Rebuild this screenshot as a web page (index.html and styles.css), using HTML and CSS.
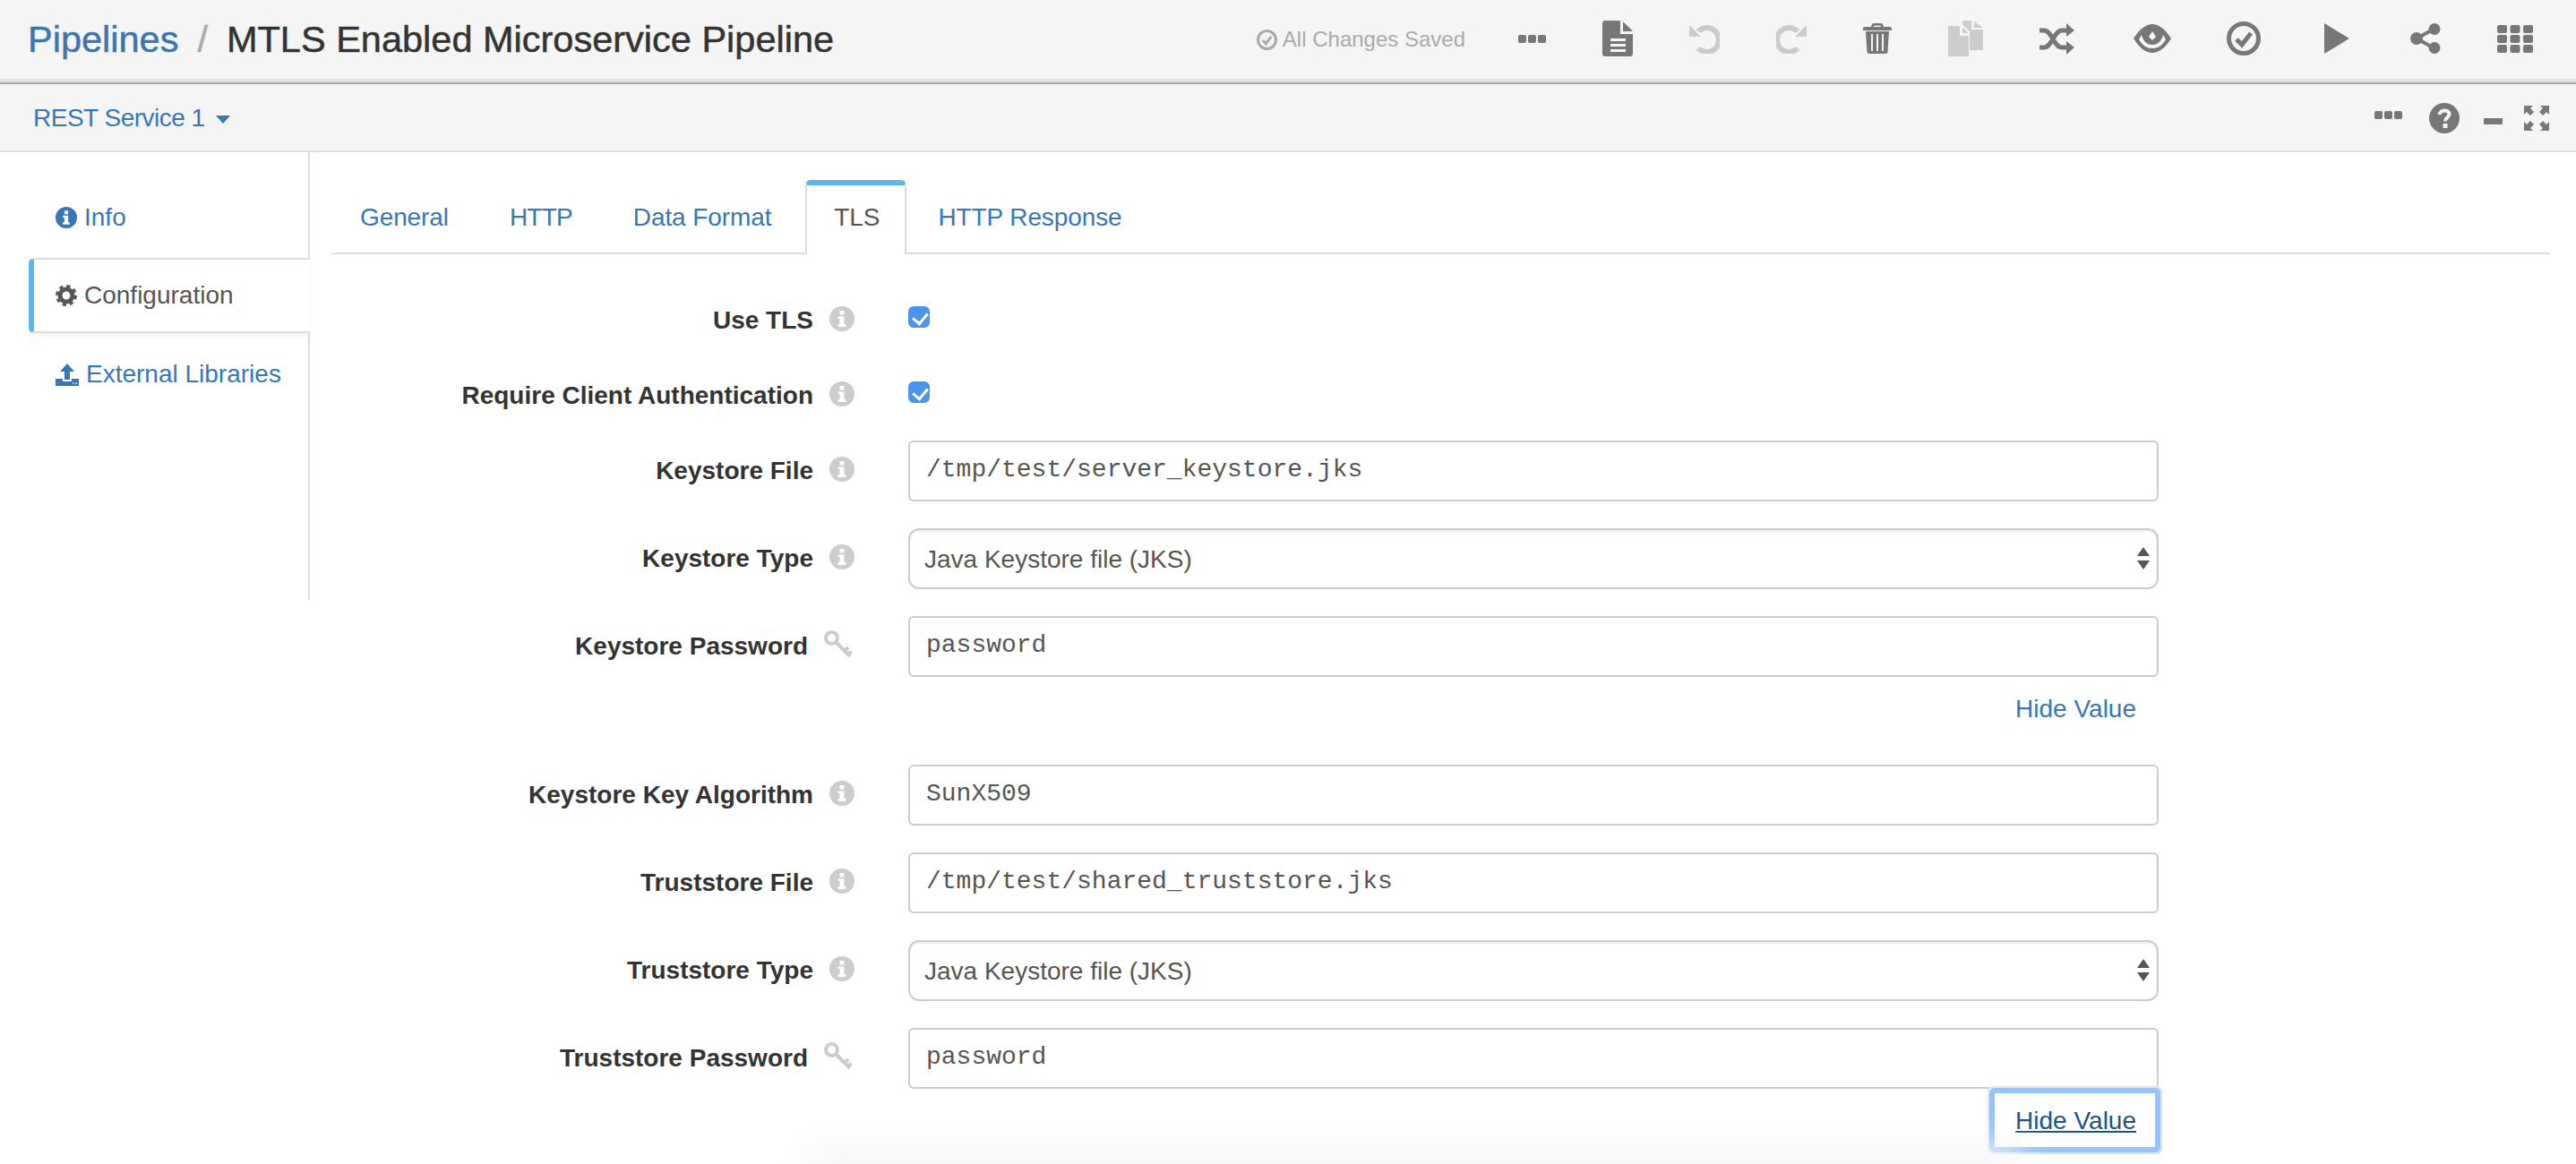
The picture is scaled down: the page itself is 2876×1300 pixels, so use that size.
FILE: index.html
```html
<!DOCTYPE html>
<html lang="en">
<head>
    <meta charset="UTF-8">
    <title>MTLS Enabled Microservice Pipeline</title>
    <link rel="stylesheet" href="styles.css">
</head>
<body>
    <svg class="sprite" xmlns="http://www.w3.org/2000/svg">
        <symbol id="i-dots" viewBox="0 0 31 9"><rect width="9" height="9" rx="2"/><rect x="11" width="9" height="9" rx="2"/><rect x="22" width="9" height="9" rx="2"/></symbol>
        <symbol id="i-doc" viewBox="0 0 34 40"><path fill-rule="evenodd" d="M3 0H20V15H34V37a3 3 0 0 1-3 3H3a3 3 0 0 1-3-3V3a3 3 0 0 1 3-3ZM9 20V23H26V20ZM9 26V29H26V26ZM9 32V35H26V32Z"/><path d="M23 1L34 12H23Z"/></symbol>
        <symbol id="i-undo" viewBox="0 0 34 34"><path d="M10 9A13.5 13.5 0 1 1 10 28" fill="none" stroke="currentColor" stroke-width="6"/><path d="M0 2V15H13Z"/></symbol>
        <symbol id="i-redo" viewBox="0 0 34 34"><path d="M24 9A13.5 13.5 0 1 0 24 28" fill="none" stroke="currentColor" stroke-width="6"/><path d="M34 2V15H21Z"/></symbol>
        <symbol id="i-trash" viewBox="0 0 32 34"><path fill-rule="evenodd" d="M9 4L10 1Q10.500 0 12 0H20Q21.500 0 22 1L23 4H30Q32 4 32 6V8H0V6Q0 4 2 4ZM12 4H20L19.500 2.500H12.500Z"/><path fill-rule="evenodd" d="M3 9H29L27.500 32Q27.400 34 25 34H7Q4.600 34 4.500 32ZM9 12V31H11V12ZM15 12V31H17V12ZM21 12V31H23V12Z"/></symbol>
        <symbol id="i-copy" viewBox="0 0 39 40"><path d="M16 0H26V10H39V33H24V12L16 4Z"/><path d="M29 1L39 8H29Z"/><path d="M0 6H13V17H23V40H0Z"/><path d="M16 8L23 14H16Z"/></symbol>
        <symbol id="i-shuffle" viewBox="0 0 39 35"><path d="M0 8H5C14 8 16 27 25 27H31M0 27H5C14 27 16 8 25 8H31" fill="none" stroke="currentColor" stroke-width="5"/><path d="M30 0L39 8L30 15ZM30 20L39 27L30 35Z"/></symbol>
        <symbol id="i-eye" viewBox="0 0 42 32"><path fill-rule="evenodd" d="M0 16C7 5 14 0 21 0S35 5 42 16C35 27 28 32 21 32S7 27 0 16ZM6 17C10 24 15 27 21 27S32 24 36 17C35 15 34 14 33 12C31 20 26 23 21 23S11 20 9 12C8 14 7 15 6 17Z"/><path fill="#f5f5f5" d="M21 8L25 14L21 18L17 14Z"/></symbol>
        <symbol id="i-check" viewBox="0 0 38 38"><circle cx="19" cy="19" r="16.500" fill="none" stroke="currentColor" stroke-width="5"/><path d="M11 20L17 26L27 13" fill="none" stroke="currentColor" stroke-width="5"/></symbol>
        <symbol id="i-share" viewBox="0 0 34 34"><path d="M7 17L27 6M7 17L27 28" stroke="currentColor" stroke-width="4"/><circle cx="7" cy="17" r="7"/><circle cx="27" cy="6.500" r="6.500"/><circle cx="27" cy="27.500" r="6.500"/></symbol>
        <symbol id="i-grid" viewBox="0 0 40 31"><rect width="11" height="9" rx="2"/><rect x="14.500" width="11" height="9" rx="2"/><rect x="29" width="11" height="9" rx="2"/><rect y="11" width="11" height="9" rx="2"/><rect x="14.500" y="11" width="11" height="9" rx="2"/><rect x="29" y="11" width="11" height="9" rx="2"/><rect y="22" width="11" height="9" rx="2"/><rect x="14.500" y="22" width="11" height="9" rx="2"/><rect x="29" y="22" width="11" height="9" rx="2"/></symbol>
        <symbol id="i-help" viewBox="0 0 34 34"><circle cx="17" cy="17" r="17"/><path d="M11.500 13C12 7 22.500 7 22.500 12.500C22.500 16 18 16 18 20.500" fill="none" stroke="#f5f5f5" stroke-width="4"/><rect x="15.500" y="23" width="5" height="5" fill="#f5f5f5"/></symbol>
        <symbol id="i-expand" viewBox="0 0 28 28"><path d="M0 0H10L7 3L11 7L7 11L3 7L0 10ZM28 0H18L21 3L17 7L21 11L25 7L28 10ZM0 28H10L7 25L11 21L7 17L3 21L0 18ZM28 28H18L21 25L17 21L21 17L25 21L28 18Z"/></symbol>
        <symbol id="i-info" viewBox="0 0 28 28"><path fill-rule="evenodd" d="M14 0a14 14 0 1 1 0 28a14 14 0 1 1 0-28ZM11.500 5V9.500H16.500V5ZM9.500 11.500V14H11.500V20H9.500V23H18.500V20H16.500V11.500Z"/></symbol>
        <symbol id="i-gear" viewBox="0 0 24 24"><circle cx="12" cy="12" r="7" fill="none" stroke="currentColor" stroke-width="5"/><circle cx="12" cy="12" r="10.500" fill="none" stroke="currentColor" stroke-width="3" stroke-dasharray="4.250 4"/></symbol>
        <symbol id="i-upload" viewBox="0 0 26 25"><path d="M13 0L21 9H16V18H10V9H5Z"/><path fill-rule="evenodd" d="M0 17H8V20H18V17H26V25H0ZM19 21.500V23H20.500V21.500ZM22.500 21.500V23H24V21.500Z"/></symbol>
        <symbol id="i-key" viewBox="0 0 32 32"><circle cx="8.500" cy="8.500" r="6.500" fill="none" stroke="currentColor" stroke-width="4"/><path d="M13 13L29 29M23 23L27 19M27 27L30.500 23.500" fill="none" stroke="currentColor" stroke-width="4"/></symbol>
    </svg>

    <header class="topbar">
        <h1 class="crumbs"><a href="#">Pipelines</a><span class="crumb-sep">/</span><span>MTLS Enabled Microservice Pipeline</span></h1>
        <div class="saved"><svg class="ic-saved"><use href="#i-check"/></svg>All Changes Saved</div>
        <div class="toolbar">
            <svg class="ic-dots"><use href="#i-dots"/></svg>
            <svg class="ic-doc"><use href="#i-doc"/></svg>
            <svg class="ic-undo off"><use href="#i-undo"/></svg>
            <svg class="ic-undo off"><use href="#i-redo"/></svg>
            <svg class="ic-trash"><use href="#i-trash"/></svg>
            <svg class="ic-copy off"><use href="#i-copy"/></svg>
            <svg class="ic-shuffle"><use href="#i-shuffle"/></svg>
            <svg class="ic-eye"><use href="#i-eye"/></svg>
            <svg class="ic-check"><use href="#i-check"/></svg>
            <svg class="ic-play" viewBox="0 0 28 34"><path d="M0 0L28 17L0 34Z"/></svg>
            <svg class="ic-share"><use href="#i-share"/></svg>
            <svg class="ic-grid"><use href="#i-grid"/></svg>
        </div>
    </header>

    <div class="stagebar">
        <a href="#" class="stage-name">REST Service 1<span class="caret"></span></a>
        <div class="stage-tools">
            <svg class="ic-dots"><use href="#i-dots"/></svg>
            <svg class="ic-help"><use href="#i-help"/></svg>
            <span class="ic-minus"></span>
            <svg class="ic-expand"><use href="#i-expand"/></svg>
        </div>
    </div>

    <div class="panel">
        <nav class="sidenav">
            <a href="#" class="side-item"><svg class="ic-side"><use href="#i-info"/></svg>Info</a>
            <a href="#" class="side-item active"><svg class="ic-side"><use href="#i-gear"/></svg>Configuration</a>
            <a href="#" class="side-item side-last"><svg class="ic-upload"><use href="#i-upload"/></svg>External Libraries</a>
        </nav>

        <main class="content">
            <ul class="tabs">
                <li><a href="#">General</a></li>
                <li class="tab-tight"><a href="#">HTTP</a></li>
                <li><a href="#">Data Format</a></li>
                <li class="active"><a href="#">TLS</a></li>
                <li><a href="#">HTTP Response</a></li>
            </ul>

            <form class="form">
                <div class="row row-check">
                    <label class="row-label">Use TLS<svg class="ic-info"><use href="#i-info"/></svg></label>
                    <div class="row-control"><input type="checkbox" class="check" checked></div>
                </div>
                <div class="row row-check">
                    <label class="row-label">Require Client Authentication<svg class="ic-info"><use href="#i-info"/></svg></label>
                    <div class="row-control"><input type="checkbox" class="check" checked></div>
                </div>
                <div class="row">
                    <label class="row-label">Keystore File<svg class="ic-info"><use href="#i-info"/></svg></label>
                    <div class="row-control"><input type="text" class="field" value="/tmp/test/server_keystore.jks"></div>
                </div>
                <div class="row">
                    <label class="row-label">Keystore Type<svg class="ic-info"><use href="#i-info"/></svg></label>
                    <div class="row-control select-wrap"><select class="field-select"><option>Java Keystore file (JKS)</option></select></div>
                </div>
                <div class="row">
                    <label class="row-label">Keystore Password<svg class="ic-key"><use href="#i-key"/></svg></label>
                    <div class="row-control">
                        <input type="text" class="field" value="password">
                        <div class="secret-toggle"><a href="#" class="hide-link">Hide Value</a></div>
                    </div>
                </div>
                <div class="row">
                    <label class="row-label">Keystore Key Algorithm<svg class="ic-info"><use href="#i-info"/></svg></label>
                    <div class="row-control"><input type="text" class="field" value="SunX509"></div>
                </div>
                <div class="row">
                    <label class="row-label">Truststore File<svg class="ic-info"><use href="#i-info"/></svg></label>
                    <div class="row-control"><input type="text" class="field" value="/tmp/test/shared_truststore.jks"></div>
                </div>
                <div class="row">
                    <label class="row-label">Truststore Type<svg class="ic-info"><use href="#i-info"/></svg></label>
                    <div class="row-control select-wrap"><select class="field-select"><option>Java Keystore file (JKS)</option></select></div>
                </div>
                <div class="row">
                    <label class="row-label">Truststore Password<svg class="ic-key"><use href="#i-key"/></svg></label>
                    <div class="row-control">
                        <input type="text" class="field" value="password">
                        <div class="secret-toggle"><a href="#" class="hide-link focused">Hide Value</a></div>
                    </div>
                </div>
            </form>
        </main>
    </div>
    <div class="bottom-fade"></div>
</body>
</html>
```

FILE: styles.css
```css
* {
    box-sizing: border-box;
}
html, body {
    height: 100%;
    overflow: hidden;
}
body {
    margin: 0;
    position: relative;
    background: #fff;
    color: #333;
    font-family: "Liberation Sans", Arial, sans-serif;
    font-size: 28px;
}
a {
    color: #3a76b3;
    text-decoration: none;
}
svg {
    fill: currentColor;
    flex: none;
}
.sprite {
    display: none;
}

/* top bar */
.topbar {
    height: 94px;
    display: flex;
    align-items: center;
    padding: 0 48px 6px 31px;
    background: #f5f5f5;
    border-bottom: 2px solid #aaa;
    box-shadow: inset 0 -4px 0 #e2e2e2;
}
.crumbs {
    margin: 2px 0 0;
    font-size: 41.500px;
    font-weight: 400;
    color: #333;
    -webkit-text-stroke: 0.5px;
}
.crumb-sep {
    margin: 0 21px;
    color: #aaa;
}
.saved {
    margin-left: auto;
    margin-right: 59px;
    margin-top: 2px;
    display: flex;
    align-items: center;
    gap: 6px;
    color: #aaa;
    font-size: 24px;
}
.ic-saved {
    width: 23px;
    height: 23px;
}
.toolbar {
    display: flex;
    align-items: center;
    gap: 63px;
    color: #777;
}
.off {
    color: #ccc;
}
.ic-dots {
    width: 31px;
    height: 9px;
}
.ic-doc {
    width: 34px;
    height: 40px;
}
.ic-undo {
    width: 34px;
    height: 34px;
}
.ic-trash {
    width: 32px;
    height: 34px;
}
.ic-copy {
    width: 39px;
    height: 40px;
}
.ic-shuffle {
    width: 39px;
    height: 35px;
}
.ic-eye {
    width: 42px;
    height: 32px;
    margin-left: 3px;
    margin-right: -1px;
}
.ic-check {
    width: 38px;
    height: 38px;
}
.ic-play {
    width: 28px;
    height: 34px;
    margin-left: 8px;
    margin-right: 5px;
}
.ic-share {
    width: 34px;
    height: 34px;
}
.ic-grid {
    width: 40px;
    height: 31px;
}

/* stage bar */
.stagebar {
    height: 76px;
    display: flex;
    align-items: center;
    padding: 2px 30px 0 37px;
    background: #f5f5f5;
    border-bottom: 2px solid #ddd;
}
.stage-name {
    letter-spacing: -0.5px;
}
.caret {
    display: inline-block;
    margin-left: 12px;
    vertical-align: middle;
    border-top: 9px solid #3a76b3;
    border-left: 8px solid transparent;
    border-right: 8px solid transparent;
}
.stage-tools {
    margin-left: auto;
    display: flex;
    align-items: center;
    color: #777;
}
.stage-tools .ic-dots {
    margin-bottom: 8px;
}
.ic-help {
    width: 34px;
    height: 34px;
    margin-left: 30px;
}
.ic-minus {
    width: 21px;
    height: 7px;
    margin-left: 27px;
    margin-top: 6px;
    background: #777;
    border-radius: 1px;
}
.ic-expand {
    width: 28px;
    height: 28px;
    margin-left: 24px;
}

/* main panel */
.panel {
    display: flex;
    align-items: flex-start;
}
.sidenav {
    width: 346px;
    height: 500px;
    flex: none;
    padding: 28px 0 0 32px;
    border-right: 2px solid #ddd;
}
.side-item {
    display: flex;
    align-items: center;
    height: 90px;
    padding-left: 30px;
}
.side-last {
    height: 92px;
}
.side-item.active {
    height: 84px;
    margin-right: -2px;
    color: #555;
    background: #fff;
    border: 2px solid #ddd;
    border-left: 6px solid #5bb8e8;
    border-right: none;
    border-radius: 6px 0 0 6px;
    padding-left: 24px;
    box-shadow: 0 3px 5px rgba(0, 0, 0, 0.05);
}
.ic-side {
    width: 24px;
    height: 24px;
    margin-right: 8px;
}
.ic-upload {
    width: 26px;
    height: 25px;
    margin-right: 8px;
}
.content {
    flex: 1;
    padding: 0 30px 0 24px;
}

/* tabs */
.tabs {
    list-style: none;
    margin: 31px 0 40px;
    padding: 0 0 0 2px;
    height: 83px;
    display: flex;
    gap: 8px;
    border-bottom: 2px solid #ddd;
}
.tabs a {
    display: block;
    height: 81px;
    padding: 26px 30px 0;
    line-height: 32px;
    letter-spacing: -0.1px;
}
.tabs .tab-tight a {
    letter-spacing: -0.8px;
}
.tabs .active {
    height: 83px;
    margin-right: -3px;
    background: #fff;
    border: 2px solid #ddd;
    border-top: 6px solid #5bb8e8;
    border-bottom: none;
    border-radius: 6px 6px 0 0;
}
.tabs .active a {
    color: #555;
    padding: 20px 28px 0 30px;
}

/* form */
.row {
    display: flex;
    margin-bottom: 30px;
}
.row-check {
    margin-bottom: 16px;
}
.row-label {
    width: 644px;
    height: 68px;
    flex: none;
    display: flex;
    align-items: center;
    justify-content: flex-end;
    padding-right: 60px;
    font-weight: 700;
    color: #333;
}
.ic-info {
    width: 28px;
    height: 28px;
    margin: -4px 0 0 18px;
    color: #ccc;
}
.ic-key {
    width: 32px;
    height: 32px;
    margin: -4px 2px 0 18px;
    color: #ccc;
}
.row-control {
    width: 1396px;
    flex: none;
    position: relative;
}
.check {
    appearance: none;
    position: relative;
    display: block;
    width: 24px;
    height: 24px;
    margin: 18px 0 0;
    background: #4c93ec;
    border-radius: 6px;
}
.check::after {
    content: "";
    position: absolute;
    left: 8px;
    top: 4px;
    width: 8px;
    height: 13px;
    border: solid #fff;
    border-width: 0 3px 3px 0;
    transform: rotate(40deg);
}
.field, .field-select {
    display: block;
    width: 100%;
    height: 68px;
    border: 2px solid #ccc;
    background: #fff;
    font-size: 28px;
    color: #555;
    outline: none;
}
.field {
    padding: 0 18px 4px;
    border-radius: 6px;
    font-family: "Liberation Mono", "Courier New", monospace;
}
.field-select {
    appearance: none;
    padding: 0 16px;
    border-radius: 12px;
    font-family: "Liberation Sans", Arial, sans-serif;
    box-shadow: inset 0 2px 2px rgba(0, 0, 0, 0.07);
}
.select-wrap::before, .select-wrap::after {
    content: "";
    position: absolute;
    right: 10px;
    border-left: 7px solid transparent;
    border-right: 7px solid transparent;
}
.select-wrap::before {
    top: 21px;
    border-bottom: 10px solid #555;
}
.select-wrap::after {
    top: 36px;
    border-top: 10px solid #555;
}
.secret-toggle {
    display: flex;
    justify-content: flex-end;
    padding: 3px 2px 0 0;
    height: 68px;
}
.hide-link {
    display: block;
    height: 64px;
    padding: 0 21px 0 23px;
    line-height: 62px;
    border: 2px solid transparent;
}
.hide-link.focused {
    color: #23527c;
    text-decoration: underline;
    background: #fff;
    outline: 6px solid #95c3fa;
    outline-offset: -2px;
    box-shadow: 0 0 0 6px #d6e6fd;
    border-radius: 2px;
}

/* faint shadow along the bottom of the window */
.bottom-fade {
    position: absolute;
    left: 900px;
    right: 620px;
    bottom: -40px;
    height: 60px;
    background: #f7f7f7;
    filter: blur(18px);
}
```
